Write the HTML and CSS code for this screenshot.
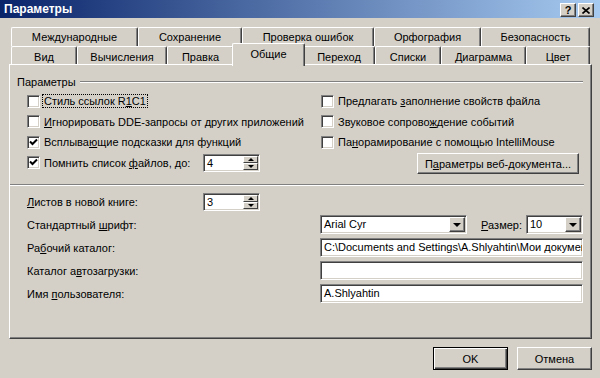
FILE: index.html
```html
<!DOCTYPE html>
<html lang="ru">

<head>
    <meta charset="UTF-8">
    <title>Параметры</title>
    <link rel="stylesheet" href="styles.css">
</head>

<body>
    <div class="window">
        <div class="titlebar">
            <span class="title">Параметры</span>
            <div class="caption-buttons">
                <span class="cap-btn help">?</span>
                <span class="cap-btn">
                    <svg width="8" height="7" viewBox="0 0 8 7"><path d="M0.5 0.5 L7.5 6.5 M7.5 0.5 L0.5 6.5" stroke="#000" stroke-width="1.6"/></svg>
                </span>
            </div>
        </div>

        <div class="tabs">
            <div class="tab-row back">
                <div class="tab">Международные</div>
                <div class="tab">Сохранение</div>
                <div class="tab">Проверка ошибок</div>
                <div class="tab">Орфография</div>
                <div class="tab">Безопасность</div>
            </div>
            <div class="tab-row front">
                <div class="tab">Вид</div>
                <div class="tab">Вычисления</div>
                <div class="tab">Правка</div>
                <div class="tab active">Общие</div>
                <div class="tab">Переход</div>
                <div class="tab">Списки</div>
                <div class="tab">Диаграмма</div>
                <div class="tab">Цвет</div>
            </div>
        </div>

        <div class="panel">
            <div class="group-head">
                <span>Параметры</span>
                <span class="etch"></span>
            </div>

            <div class="options">
                <label class="check">
                    <span class="checkbox"></span>
                    <span class="focus">Стиль ссылок R<u>1</u>C1</span>
                </label>
                <label class="check">
                    <span class="checkbox"></span>
                    <span>Предлагать <u>з</u>аполнение свойств файла</span>
                </label>
                <label class="check">
                    <span class="checkbox"></span>
                    <span><u>И</u>гнорировать DDE-запросы от других приложений</span>
                </label>
                <label class="check">
                    <span class="checkbox"></span>
                    <span>Звуковое сопрово<u>ж</u>дение событий</span>
                </label>
                <label class="check">
                    <span class="checkbox checked"><svg width="9" height="9" viewBox="0 0 9 9"><path d="M1 3.5 L3.5 6 L8 1.5" fill="none" stroke="#000" stroke-width="2"/></svg></span>
                    <span>Всплыва<u>ю</u>щие подсказки для функций</span>
                </label>
                <label class="check">
                    <span class="checkbox"></span>
                    <span>Па<u>н</u>орамирование с помощью IntelliMouse</span>
                </label>
                <div class="check-spin">
                    <label class="check">
                        <span class="checkbox checked"><svg width="9" height="9" viewBox="0 0 9 9"><path d="M1 3.5 L3.5 6 L8 1.5" fill="none" stroke="#000" stroke-width="2"/></svg></span>
                        <span>Помнить список <u>ф</u>айлов, до:</span>
                    </label>
                    <div class="spin">
                        <span class="spin-value">4</span>
                        <span class="spin-buttons">
                            <span class="spin-btn"><span class="arrow-up"></span></span>
                            <span class="spin-btn"><span class="arrow-down"></span></span>
                        </span>
                    </div>
                </div>
                <button class="btn web-btn">П<u>а</u>раметры веб-документа...</button>
            </div>

            <div class="divider"></div>

            <div class="fields">
                <span class="field-label"><u>Л</u>истов в новой книге:</span>
                <div class="spin">
                    <span class="spin-value">3</span>
                    <span class="spin-buttons">
                        <span class="spin-btn"><span class="arrow-up"></span></span>
                        <span class="spin-btn"><span class="arrow-down"></span></span>
                    </span>
                </div>
                <span></span>

                <span class="field-label wide">Стандартный <u>ш</u>рифт:</span>
                <div class="font-row">
                    <div class="combo font-combo">
                        <span class="combo-value">Arial Cyr</span>
                        <span class="combo-btn"><span class="arrow-combo"></span></span>
                    </div>
                    <span class="size-label"><u>Р</u>азмер:</span>
                    <div class="combo size-combo">
                        <span class="combo-value">10</span>
                        <span class="combo-btn"><span class="arrow-combo"></span></span>
                    </div>
                </div>

                <span class="field-label wide">Ра<u>б</u>очий каталог:</span>
                <div class="textbox">C:\Documents and Settings\A.Shlyahtin\Мои документы</div>

                <span class="field-label wide">Каталог а<u>в</u>тозагрузки:</span>
                <div class="textbox"></div>

                <span class="field-label wide">Имя <u>п</u>ользователя:</span>
                <div class="textbox">A.Shlyahtin</div>
            </div>
        </div>

        <div class="dialog-buttons">
            <button class="btn default">OK</button>
            <button class="btn">Отмена</button>
        </div>
    </div>
</body>

</html>
```

FILE: styles.css
```css
body {
    margin: 0;
    font-family: "Liberation Sans", Arial, sans-serif;
    font-size: 11px;
    color: #000;
    background-color: #D4D0C8;
}

.window {
    width: 600px;
    height: 378px;
    overflow: hidden;
    background-color: #D4D0C8;
}

u {
    text-underline-offset: 1px;
}

/* title bar */

.titlebar {
    height: 18px;
    display: flex;
    align-items: center;
    justify-content: space-between;
    padding: 0 6px 0 4px;
    background: linear-gradient(to right, #0A246A, #A6CAF0);
}

.title {
    color: #fff;
    font-weight: bold;
    font-size: 12px;
}

.caption-buttons {
    display: flex;
    gap: 2px;
    margin-top: 2px;
}

.cap-btn {
    box-sizing: border-box;
    width: 16px;
    height: 14px;
    display: flex;
    align-items: center;
    justify-content: center;
    border: 1px solid;
    border-color: #fff #404040 #404040 #fff;
    box-shadow: inset -1px -1px #808080;
    background-color: #D4D0C8;
}

.cap-btn.help {
    font-weight: bold;
    font-size: 11px;
    line-height: 12px;
}

/* tabs */

.tabs {
    margin: 9px 10px 0 11px;
}

.tab-row {
    display: grid;
}

.tab-row.back {
    height: 19px;
    grid-template-columns: 127px 104px 132px 107px 109px;
}

.tab-row.front {
    height: 18px;
    grid-template-columns: 66px 90px 67px 69px 72px 66px 85px 64px;
}

.tab {
    display: flex;
    align-items: center;
    justify-content: center;
    border: 1px solid #fff;
    border-bottom: none;
    border-right-color: #404040;
    border-radius: 2px 2px 0 0;
    box-shadow: inset -1px 0 #808080;
    background-color: #D4D0C8;
    white-space: nowrap;
}

.front .tab {
    padding-top: 3px;
}

.tab.active {
    position: relative;
    z-index: 2;
    margin: -3px -2px -2px;
    padding-top: 0;
    padding-bottom: 2px;
}

/* panel */

.panel {
    box-sizing: border-box;
    height: 275px;
    margin: 0 8px 0 9px;
    padding-right: 7px;
    border: 1px solid;
    border-color: #fff #404040 #404040 #fff;
    box-shadow: inset -1px -1px #808080;
}

.group-head {
    display: flex;
    align-items: center;
    height: 12px;
    margin: 11px 1px 0 7px;
}

.etch {
    flex: 1;
    margin-left: 4px;
    border-top: 1px solid #808080;
    border-bottom: 1px solid #fff;
}

.options {
    display: grid;
    grid-template-columns: 294px 1fr;
    grid-template-rows: 20px 21px 20px 21px;
    margin: 3px 0 0 17px;
}

.check {
    display: flex;
    align-items: center;
    gap: 4px;
    white-space: nowrap;
}

.checkbox {
    box-sizing: border-box;
    width: 13px;
    height: 13px;
    flex: none;
    display: flex;
    align-items: center;
    justify-content: center;
    border: 1px solid;
    border-color: #808080 #fff #fff #808080;
    box-shadow: inset 1px 1px #404040, inset -1px -1px #D4D0C8;
    background-color: #fff;
}

.focus {
    outline: 1px dotted #000;
    outline-offset: 0;
    padding: 0 1px;
    margin-left: -1px;
}

.check-spin {
    display: grid;
    grid-template-columns: 176px 57px;
    align-items: center;
}

.btn.web-btn {
    width: 162px;
    height: 21px;
    justify-self: end;
    align-self: start;
    margin: 1px 5px 0 0;
    white-space: nowrap;
}

.divider {
    margin-top: 11px;
    border-top: 1px solid #808080;
    border-bottom: 1px solid #fff;
}

/* lower fields */

.fields {
    display: grid;
    grid-template-columns: 176px 117px 263px;
    grid-auto-rows: 19px;
    row-gap: 4px;
    margin: 6px 0 0 17px;
    align-items: center;
}

.field-label {
    white-space: nowrap;
}

.field-label.wide {
    grid-column: 1 / 3;
}

.spin {
    box-sizing: border-box;
    width: 57px;
    height: 18px;
    display: flex;
    border: 1px solid;
    border-color: #808080 #fff #fff #808080;
    box-shadow: inset 1px 1px #404040, inset -1px -1px #D4D0C8;
    background-color: #fff;
    padding: 1px;
}

.spin-value {
    flex: 1;
    padding-left: 2px;
    line-height: 14px;
}

.spin-buttons {
    display: flex;
    flex-direction: column;
    width: 15px;
}

.spin-btn {
    flex: 1;
    box-sizing: border-box;
    display: flex;
    align-items: center;
    justify-content: center;
    border: 1px solid;
    border-color: #fff #404040 #404040 #fff;
    background-color: #D4D0C8;
}

.arrow-up {
    border-left: 3px solid transparent;
    border-right: 3px solid transparent;
    border-bottom: 3px solid #000;
}

.arrow-down {
    border-left: 3px solid transparent;
    border-right: 3px solid transparent;
    border-top: 3px solid #000;
}

.font-row {
    display: flex;
    align-items: center;
}

.combo {
    box-sizing: border-box;
    height: 19px;
    display: flex;
    border: 1px solid;
    border-color: #808080 #fff #fff #808080;
    box-shadow: inset 1px 1px #404040, inset -1px -1px #D4D0C8;
    background-color: #fff;
    padding: 1px;
}

.font-combo {
    width: 147px;
}

.size-combo {
    width: 57px;
    margin-left: 4px;
}

.size-label {
    margin-left: auto;
}

.combo-value {
    flex: 1;
    padding-left: 2px;
    line-height: 15px;
    white-space: nowrap;
}

.combo-btn {
    box-sizing: border-box;
    width: 16px;
    display: flex;
    align-items: center;
    justify-content: center;
    border: 1px solid;
    border-color: #fff #404040 #404040 #fff;
    box-shadow: inset -1px -1px #808080;
    background-color: #D4D0C8;
}

.arrow-combo {
    border-left: 4px solid transparent;
    border-right: 4px solid transparent;
    border-top: 4px solid #000;
}

.textbox {
    box-sizing: border-box;
    height: 19px;
    padding: 0 3px;
    line-height: 17px;
    border: 1px solid;
    border-color: #808080 #fff #fff #808080;
    box-shadow: inset 1px 1px #404040, inset -1px -1px #D4D0C8;
    background-color: #fff;
    white-space: nowrap;
    overflow: hidden;
}

/* buttons */

.btn {
    box-sizing: border-box;
    width: 75px;
    height: 23px;
    padding: 0;
    font: inherit;
    color: #000;
    border: 1px solid;
    border-color: #fff #404040 #404040 #fff;
    box-shadow: inset -1px -1px #808080;
    background-color: #D4D0C8;
}

.btn.default {
    border-color: #000;
    box-shadow: inset 1px 1px #fff, inset -1px -1px #404040, inset -2px -2px #808080;
}

.dialog-buttons {
    display: flex;
    justify-content: flex-end;
    gap: 9px;
    margin-top: 8px;
    padding-right: 8px;
}
```
